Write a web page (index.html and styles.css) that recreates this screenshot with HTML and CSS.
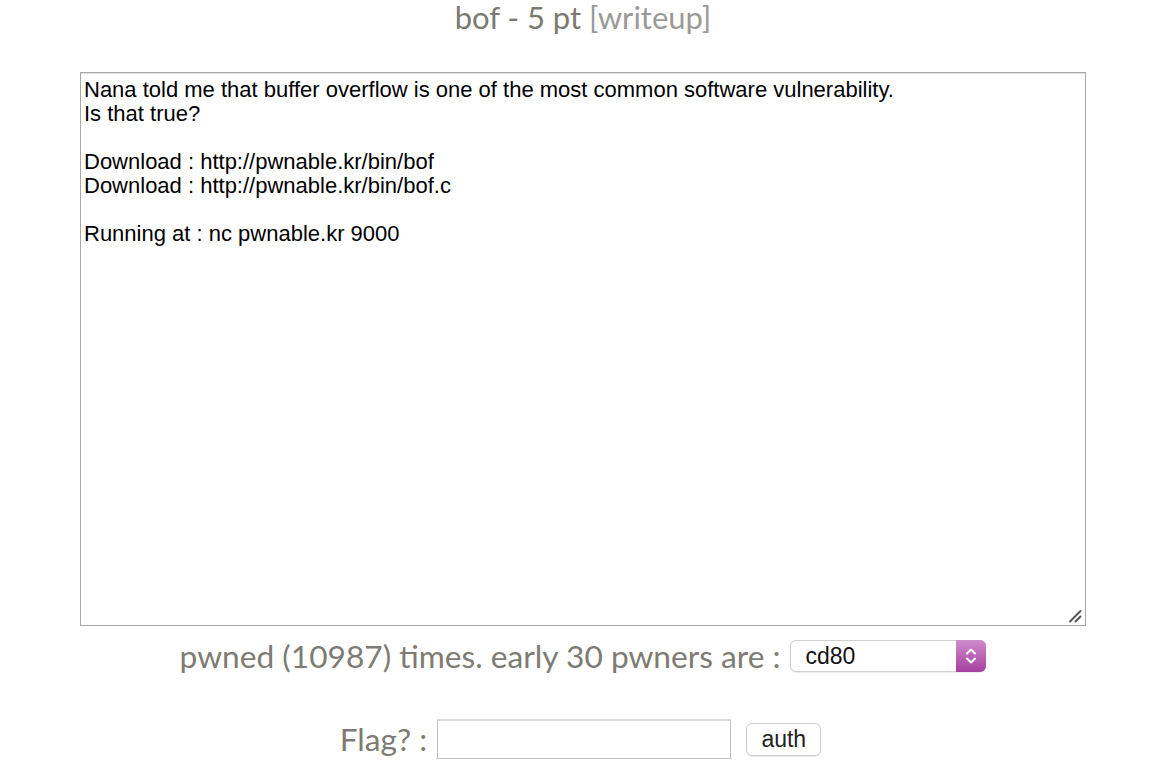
FILE: index.html
```html
<!DOCTYPE html>
<html>
<head>
<meta charset="utf-8">
<title>bof</title>
<link rel="stylesheet" href="styles.css">
</head>
<body>
<div class="main">
  <h2 class="title">bof - 5 pt <a class="writeup">[writeup]</a></h2>
  <div class="desc-wrap">
    <textarea class="desc" readonly>Nana told me that buffer overflow is one of the most common software vulnerability. 
Is that true?

Download : http://pwnable.kr/bin/bof
Download : http://pwnable.kr/bin/bof.c

Running at : nc pwnable.kr 9000
</textarea>
    <svg class="grip" width="14" height="14" viewBox="0 0 14 14"><path d="M2 12.5 L12.5 2 M7.5 12.5 L12.5 7.5" stroke="#555" stroke-width="2" stroke-linecap="round"/></svg>
  </div>
  <div class="pwned-row">
    <span class="label">pwned (10987) times. early 30 pwners are :</span>
    <div class="select-wrap">
      <select class="pwners"><option>cd80</option></select>
      <span class="select-arrow">
        <svg width="12" height="20" viewBox="0 0 12 20"><path d="M2 7.5 L6 3.5 L10 7.5 M2 12.5 L6 16.5 L10 12.5" fill="none" stroke="#fff" stroke-width="2" stroke-linecap="round" stroke-linejoin="round"/></svg>
      </span>
    </div>
  </div>
  <form class="flag-row">
    <span class="label">Flag? :</span>
    <input class="flag-input" type="text">
    <button class="auth" type="button">auth</button>
  </form>
</div>
</body>
</html>
```

FILE: styles.css
```css
html, body {
  margin: 0;
  padding: 0;
  background: #fff;
}
.main {
  padding: 0 88px 0 80px;
  display: flex;
  flex-direction: column;
  align-items: center;
  font-family: Lato, "Liberation Sans", sans-serif;
}
.title {
  margin: 0;
  font-size: 31px;
  line-height: 34px;
  font-weight: 400;
  color: #7b7970;
  text-align: center;
}
.writeup {
  color: #9a9997;
}
.desc-wrap {
  position: relative;
  width: 100%;
  margin-top: 38px;
}
.desc {
  display: block;
  box-sizing: border-box;
  width: 100%;
  height: 554px;
  margin: 0;
  padding: 5px 3px;
  border: 1px solid #a8a8a8;
  box-shadow: inset 0 1px 0 #e2e2e2;
  font-family: "Liberation Sans", Arial, sans-serif;
  font-size: 22px;
  line-height: 24px;
  color: #000;
  resize: none;
  outline: none;
}
.grip {
  position: absolute;
  right: 4px;
  bottom: 3px;
}
.pwned-row {
  display: flex;
  align-items: center;
  gap: 10px;
  margin-top: 14px;
  height: 32px;
}
.label {
  font-size: 31.7px;
  color: #7d7b73;
}
.select-wrap {
  position: relative;
  width: 196px;
  height: 32px;
}
.pwners {
  appearance: none;
  -webkit-appearance: none;
  box-sizing: border-box;
  width: 100%;
  height: 32px;
  margin: 0;
  padding: 0 0 0 14px;
  border: 1px solid #cfcfcf;
  border-radius: 6px;
  background: #fff;
  font-family: "Liberation Sans", Arial, sans-serif;
  font-size: 23px;
  color: #111;
  box-shadow: 0 1px 1px rgba(0,0,0,0.08);
}
.select-arrow {
  position: absolute;
  top: 0;
  right: 0;
  width: 30px;
  height: 32px;
  border-radius: 0 6px 6px 0;
  background: linear-gradient(#cf8bcd, #a6409f);
  display: flex;
  align-items: center;
  justify-content: center;
}
.flag-row {
  display: flex;
  align-items: center;
  margin: 47px 5px 0 0;
}
.flag-input {
  box-sizing: border-box;
  width: 294px;
  height: 40px;
  margin: 0 15px 0 10px;
  border: 1px solid #c2c2c2;
  border-top: 2px solid #dcdcdc;
  padding: 0 6px;
  font-size: 21px;
  outline: none;
}
.auth {
  box-sizing: border-box;
  width: 75px;
  height: 33px;
  margin-top: 1px;
  padding: 0;
  border: 1px solid #cdcdcd;
  border-radius: 6px;
  background: #fff;
  box-shadow: 0 1px 1px rgba(0,0,0,0.08);
  font-family: "Liberation Sans", Arial, sans-serif;
  font-size: 23px;
  color: #222;
}
```
